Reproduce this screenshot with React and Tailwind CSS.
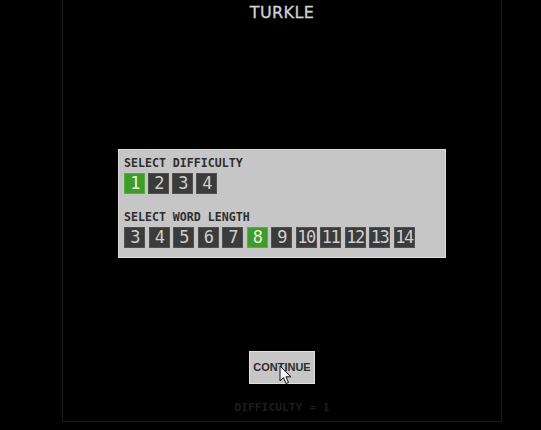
import React from 'react';

const difficulties = [1, 2, 3, 4];
const lengths = [3, 4, 5, 6, 7, 8, 9, 10, 11, 12, 13, 14];

function NumButton({ value, active }) {
  return (
    <div
      className={`w-[21px] h-[21px] flex items-center justify-center border text-[17px] leading-none font-['DejaVu_Sans_Mono',monospace] tracking-[-1.5px] ${
        active
          ? 'bg-[#3f9b2b] border-[#56b03f] text-[#e4f4dc]'
          : 'bg-[#3b3b3b] border-[#505050] text-[#cfcfcf]'
      }`}
    >
      {value}
    </div>
  );
}

function Cursor() {
  return (
    <svg className="absolute left-[29px] top-[13px]" width="13" height="21" viewBox="0 0 13 21">
      <path
        d="M1 1 L1 16 L4.5 12.5 L7 18.5 L9.5 17.5 L7 11.8 L12 11.8 Z"
        fill="#f4f4f4"
        stroke="#111"
        strokeWidth="1"
        strokeLinejoin="round"
      />
    </svg>
  );
}

export default function App() {
  return (
    <div className="w-[541px] h-[430px] bg-black overflow-hidden">
      <div className="ml-[62px] w-[440px] h-[422px] border-x border-b border-[#1b1b1b] flex flex-col items-center">
        <div className="pt-[4px] text-[16px] leading-[18px] text-[#d2d2d2] font-['DejaVu_Sans',sans-serif] font-medium tracking-[0.4px] [-webkit-text-stroke:0.3px_#d2d2d2]">
          TURKLE
        </div>

        <div className="mt-[127px] w-[328px] h-[109px] bg-[#c6c6c6] border border-[#dadada] pl-[5px] pt-[7px] font-['DejaVu_Sans_Mono',monospace]">
          <div className="text-[11.6px] leading-[13px] font-bold text-[#2e2e2e]">SELECT DIFFICULTY</div>
          <div className="mt-[3px] flex gap-[3px]">
            {difficulties.map((d) => (
              <NumButton key={d} value={d} active={d === 1} />
            ))}
          </div>
          <div className="mt-[17px] text-[11.6px] leading-[13px] font-bold text-[#2e2e2e]">SELECT WORD LENGTH</div>
          <div className="mt-[3px] flex gap-[3.5px]">
            {lengths.map((n) => (
              <NumButton key={n} value={n} active={n === 8} />
            ))}
          </div>
        </div>

        <div className="relative mt-[93px] w-[66px] h-[33px] bg-[#c6c6c6] border border-[#e0e0e0] flex items-center justify-center">
          <span className="text-[11px] font-bold text-[#2c2c2c] font-['Liberation_Sans',sans-serif]">CONTINUE</span>
          <Cursor />
        </div>

        <div className="mt-[17px] text-[11.3px] leading-[13px] font-bold text-[#1d1d1d] font-['DejaVu_Sans_Mono',monospace]">
          DIFFICULTY = 1
        </div>
      </div>
    </div>
  );
}
